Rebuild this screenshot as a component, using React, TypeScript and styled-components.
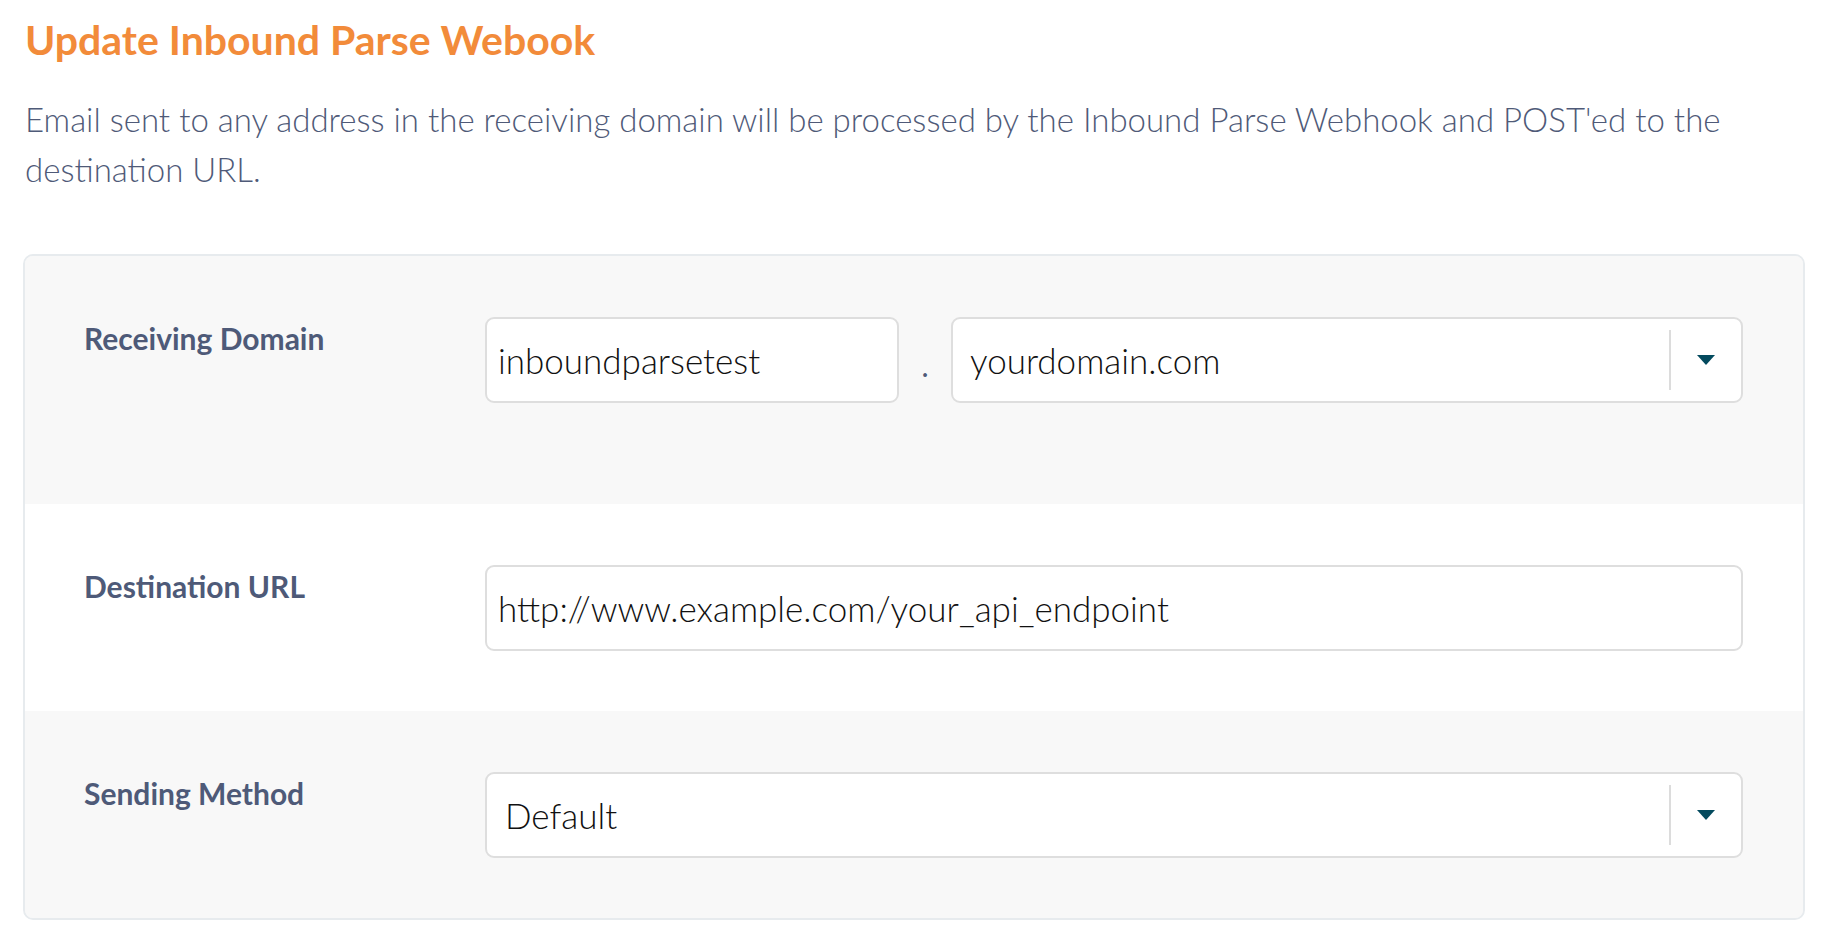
import React from "react";
import styled, { createGlobalStyle } from "styled-components";

const GlobalStyle = createGlobalStyle`
  html, body {
    margin: 0;
    padding: 0;
    background: #ffffff;
  }
  body {
    font-family: Lato, "Open Sans", Arial, sans-serif;
    -webkit-font-smoothing: antialiased;
  }
  * { box-sizing: border-box; }
`;

const Page = styled.div`
  padding: 17px 23px 20px 23px;
`;

const Title = styled.h1`
  margin: 0 0 0 2px;
  font-family: Lato, Arial, sans-serif;
  font-weight: 700;
  font-size: 41px;
  line-height: 46px;
  color: #f28b3a;
`;

const Description = styled.p`
  margin: 31px 0 0 2px;
  max-width: 1740px;
  font-family: Lato, Arial, sans-serif;
  font-weight: 300;
  font-size: 33px;
  line-height: 50px;
  color: #4f5a78;
`;

const Card = styled.section`
  margin-top: 60px;
  border: 2px solid #e7ebee;
  border-radius: 10px;
  overflow: hidden;
  background: #f8f8f8;
`;

const Row = styled.div<{ $tone: "gray" | "white"; $extra?: boolean }>`
  display: grid;
  grid-template-columns: 401px 1fr;
  align-items: start;
  padding: 61px 60px ${(p) => (p.$extra ? 101 : 60)}px 59px;
  background: ${(p) => (p.$tone === "gray" ? "#f8f8f8" : "#ffffff")};
`;

const Label = styled.label`
  padding-top: 1px;
  font-family: Lato, Arial, sans-serif;
  font-weight: 700;
  font-size: 30px;
  line-height: 40px;
  color: #4e5a78;
`;

const Controls = styled.div`
  display: flex;
  align-items: center;
`;

const Field = styled.div<{ $width?: number }>`
  display: flex;
  align-items: center;
  height: 86px;
  ${(p) => (p.$width ? `width: ${p.$width}px; flex: none;` : "flex: 1;")}
  background: #ffffff;
  border: 2px solid #dedede;
  border-radius: 9px;
  padding: 0 0 0 11px;
  font-family: Lato, Arial, sans-serif;
  font-weight: 300;
  font-size: 35px;
  color: #111111;
`;

const FieldText = styled.span<{ $indent?: number }>`
  flex: 1;
  padding-left: ${(p) => p.$indent ?? 0}px;
  white-space: nowrap;
  overflow: hidden;
`;

const Dot = styled.span`
  width: 52px;
  flex: none;
  text-align: center;
  font-family: Lato, Arial, sans-serif;
  font-size: 30px;
  color: #4e5a78;
  padding-top: 10px;
`;

const Divider = styled.span`
  width: 2px;
  height: 60px;
  background: #dcdcdc;
  flex: none;
`;

const ArrowBox = styled.span`
  width: 70px;
  flex: none;
  display: flex;
  align-items: center;
  justify-content: center;
`;

const Caret = () => (
  <svg width="18" height="10" viewBox="0 0 18 10" aria-hidden="true">
    <path d="M0 0 H18 L9 10 Z" fill="#034a5e" />
  </svg>
);

const Select = ({ value, indent }: { value: string; indent?: number }) => (
  <Field>
    <FieldText $indent={indent}>{value}</FieldText>
    <Divider />
    <ArrowBox>
      <Caret />
    </ArrowBox>
  </Field>
);

export default function App() {
  return (
    <>
      <GlobalStyle />
      <Page>
        <Title>Update Inbound Parse Webook</Title>
        <Description>
          Email sent to any address in the receiving domain will be processed by the Inbound
          Parse Webhook and POST'ed to the destination URL.
        </Description>
        <Card>
          <Row $tone="gray" $extra>
            <Label>Receiving Domain</Label>
            <Controls>
              <Field $width={414}>
                <FieldText>inboundparsetest</FieldText>
              </Field>
              <Dot>.</Dot>
              <Select value="yourdomain.com" indent={6} />
            </Controls>
          </Row>
          <Row $tone="white">
            <Label>Destination URL</Label>
            <Controls>
              <Field>
                <FieldText>http://www.example.com/your_api_endpoint</FieldText>
              </Field>
            </Controls>
          </Row>
          <Row $tone="gray">
            <Label>Sending Method</Label>
            <Controls>
              <Select value="Default" indent={7} />
            </Controls>
          </Row>
        </Card>
      </Page>
    </>
  );
}
